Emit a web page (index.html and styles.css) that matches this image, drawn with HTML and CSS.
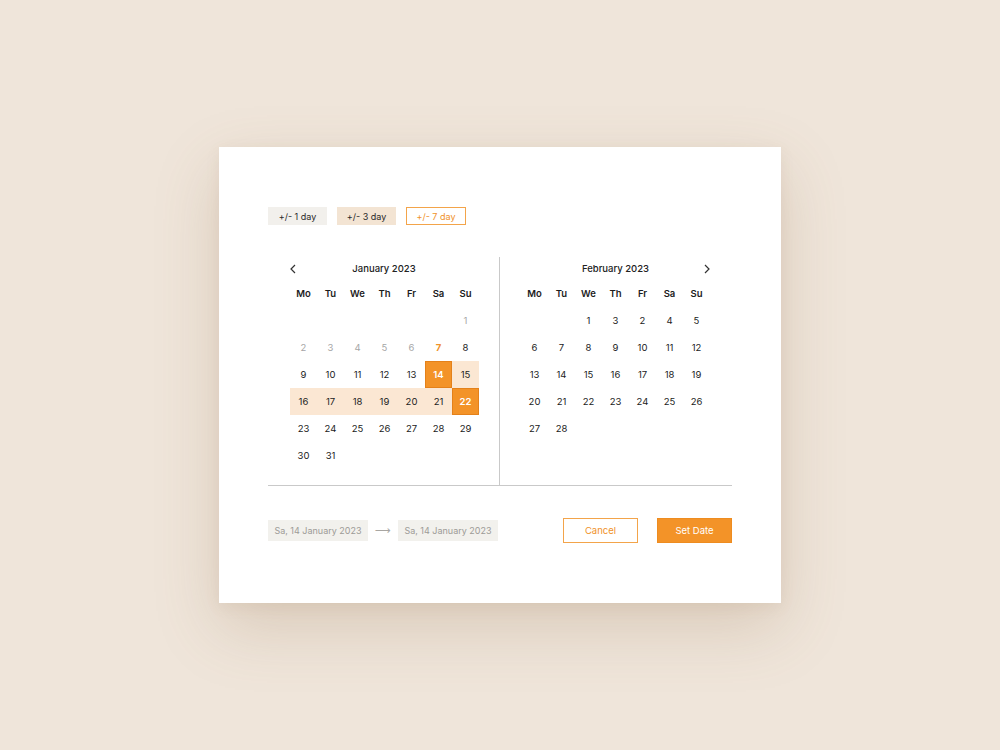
FILE: index.html
```html
<!DOCTYPE html>
<html>
<head>
<meta charset="utf-8">
<link rel="stylesheet" href="styles.css">
</head>
<body>
<div class="card">
  <div class="chips">
    <div class="chip chip-grey">+/- 1 day</div>
    <div class="chip chip-beige">+/- 3 day</div>
    <div class="chip chip-active">+/- 7 day</div>
  </div>
  <div class="calendars">
    <div class="panel panel-left">
      <div class="head">
        <svg class="nav nav-prev" width="8" height="10" viewBox="0 0 8 10"><path d="M6 1 L2 5 L6 9" fill="none" stroke="#333" stroke-width="1.2"/></svg>
        <span class="title">January 2023</span>
      </div>
      <div class="grid">
        <div class="wd">Mo</div><div class="wd">Tu</div><div class="wd">We</div><div class="wd">Th</div><div class="wd">Fr</div><div class="wd">Sa</div><div class="wd">Su</div>
        <div></div><div></div><div></div><div></div><div></div><div></div><div class="d muted">1</div>
        <div class="d muted">2</div><div class="d muted">3</div><div class="d muted">4</div><div class="d muted">5</div><div class="d muted">6</div><div class="d today">7</div><div class="d">8</div>
        <div class="d">9</div><div class="d">10</div><div class="d">11</div><div class="d">12</div><div class="d">13</div><div class="d sel">14</div><div class="d range">15</div>
        <div class="d range">16</div><div class="d range">17</div><div class="d range">18</div><div class="d range">19</div><div class="d range">20</div><div class="d range">21</div><div class="d sel">22</div>
        <div class="d">23</div><div class="d">24</div><div class="d">25</div><div class="d">26</div><div class="d">27</div><div class="d">28</div><div class="d">29</div>
        <div class="d">30</div><div class="d">31</div>
      </div>
    </div>
    <div class="panel panel-right">
      <div class="head">
        <span class="title">February 2023</span>
        <svg class="nav nav-next" width="8" height="10" viewBox="0 0 8 10"><path d="M2 1 L6 5 L2 9" fill="none" stroke="#333" stroke-width="1.2"/></svg>
      </div>
      <div class="grid">
        <div class="wd">Mo</div><div class="wd">Tu</div><div class="wd">We</div><div class="wd">Th</div><div class="wd">Fr</div><div class="wd">Sa</div><div class="wd">Su</div>
        <div></div><div></div><div class="d">1</div><div class="d">3</div><div class="d">2</div><div class="d">4</div><div class="d">5</div>
        <div class="d">6</div><div class="d">7</div><div class="d">8</div><div class="d">9</div><div class="d">10</div><div class="d">11</div><div class="d">12</div>
        <div class="d">13</div><div class="d">14</div><div class="d">15</div><div class="d">16</div><div class="d">17</div><div class="d">18</div><div class="d">19</div>
        <div class="d">20</div><div class="d">21</div><div class="d">22</div><div class="d">23</div><div class="d">24</div><div class="d">25</div><div class="d">26</div>
        <div class="d">27</div><div class="d">28</div>
      </div>
    </div>
  </div>
  <div class="footer">
    <div class="field">Sa, 14 January 2023</div>
    <div class="arrow">⟶</div>
    <div class="field">Sa, 14 January 2023</div>
    <div class="spacer"></div>
    <button class="btn btn-cancel">Cancel</button>
    <button class="btn btn-set">Set Date</button>
  </div>
</div>
</body>
</html>
```
FILE: styles.css
```css
html, body {
  margin: 0;
  padding: 0;
}
body {
  width: 1000px;
  height: 750px;
  background: #efe5da;
  display: flex;
  align-items: center;
  justify-content: center;
  font-family: Inter, "Noto Sans", sans-serif;
  color: #1e1e1e;
}
.card {
  width: 562px;
  height: 456px;
  box-sizing: border-box;
  background: #ffffff;
  padding: 60px 49px;
  box-shadow: 0 24px 60px rgba(140, 105, 70, 0.22), 0 4px 14px rgba(140, 105, 70, 0.08);
  display: flex;
  flex-direction: column;
}
.chips {
  display: flex;
  gap: 10px;
  height: 18px;
}
.chip {
  width: 59px;
  height: 18px;
  box-sizing: border-box;
  display: flex;
  align-items: center;
  justify-content: center;
  font-size: 9px;
  color: #2a2a2a;
}
.chip-grey { background: #f2f0ec; }
.chip-beige { background: #f3e4d3; }
.chip-active {
  width: 60px;
  border: 1px solid #f3a44a;
  color: #f0922a;
  background: #fff;
}
.calendars {
  margin-top: 32px;
  display: flex;
  height: 229px;
  border-bottom: 1px solid #c9c9c9;
}
.panel {
  width: 232px;
  box-sizing: border-box;
  padding: 0 21px 0 22px;
}
.panel-left {
  border-right: 1px solid #c9c9c9;
}
.panel-right {
  padding: 0 22px 0 21px;
}
.head {
  height: 23px;
  position: relative;
  display: flex;
  align-items: center;
  justify-content: center;
}
.title {
  font-size: 9.5px;
  font-weight: 500;
  color: #222;
}
.nav {
  position: absolute;
  top: 7px;
}
.nav-prev { left: -1px; }
.nav-next { right: -1px; }
.grid {
  display: grid;
  grid-template-columns: repeat(7, 27px);
  grid-auto-rows: 27px;
}
.grid > div {
  display: flex;
  align-items: center;
  justify-content: center;
  font-size: 9.5px;
  box-sizing: border-box;
}
.wd {
  font-weight: 600;
  color: #1c1c1c;
}
.d { color: #222; }
.muted { color: #a6a6a6; }
.today { color: #f0922a; font-weight: 700; }
.range { background: #fbe7d3; }
.sel {
  background: #f39328;
  color: #ffffff;
  font-weight: 600;
  border: 1px solid #e4811a;
}
.footer {
  margin-top: 32px;
  height: 25px;
  display: flex;
  align-items: center;
}
.field {
  width: 100px;
  height: 21px;
  background: #f2f1ed;
  color: #9d9b97;
  font-size: 9px;
  display: flex;
  align-items: center;
  justify-content: center;
}
.arrow {
  width: 30px;
  text-align: center;
  color: #a8a6a2;
  font-size: 11px;
  font-family: "DejaVu Sans", sans-serif;
}
.spacer { flex: 1; }
.btn {
  width: 75px;
  height: 25px;
  box-sizing: border-box;
  font-family: Inter, "Noto Sans", sans-serif;
  font-size: 9.5px;
  padding: 0;
  cursor: pointer;
}
.btn-cancel {
  background: #fff;
  border: 1px solid #f3a44a;
  color: #f0922a;
}
.btn-set {
  margin-left: 19px;
  background: #f39328;
  border: 1px solid #ee8c20;
  color: #ffffff;
}
```
